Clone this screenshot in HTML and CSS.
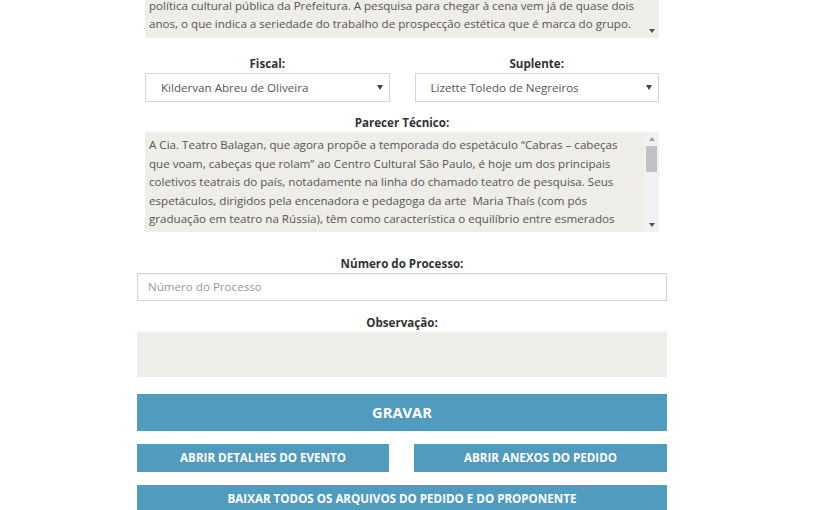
FILE: index.html
```html
<!DOCTYPE html>
<html lang="pt-BR">
<head>
<meta charset="utf-8">
<title>Parecer</title>
<link rel="stylesheet" href="styles.css">
</head>
<body>
<div class="page">
  <div class="inner">
    <div class="area area-top">
      <div class="area-text">
        <p>política cultural pública da Prefeitura. A pesquisa para chegar à cena vem já de quase dois<br>anos, o que indica a seriedade do trabalho de prospecção estética que é marca do grupo.</p>
      </div>
      <div class="sbar sbar-plain">
        <span class="arr-down"></span>
      </div>
    </div>

    <div class="two-col sec-fiscal">
      <div class="field">
        <label class="lbl">Fiscal:</label>
        <div class="select">Kildervan Abreu de Oliveira<span class="caret"></span></div>
      </div>
      <div class="field">
        <label class="lbl">Suplente:</label>
        <div class="select">Lizette Toledo de Negreiros<span class="caret"></span></div>
      </div>
    </div>

    <div class="field sec-parecer">
      <label class="lbl">Parecer Técnico:</label>
      <div class="area area-parecer">
        <div class="area-text">
          <p>A Cia. Teatro Balagan, que agora propõe a temporada do espetáculo “Cabras – cabeças que voam, cabeças que rolam” ao Centro Cultural São Paulo, é hoje um dos principais coletivos teatrais do país, notadamente na linha do chamado teatro de pesquisa. Seus espetáculos, dirigidos pela encenadora e pedagoga da arte&nbsp; Maria Thaís (com pós graduação em teatro na Rússia), têm como característica o equilíbrio entre esmerados</p>
        </div>
        <div class="sbar">
          <span class="arr-up"></span>
          <span class="thumb"></span>
          <span class="arr-down"></span>
        </div>
      </div>
    </div>
  </div>

  <div class="field sec-num">
    <label class="lbl">Número do Processo:</label>
    <div class="input">Número do Processo</div>
  </div>

  <div class="field sec-obs">
    <label class="lbl">Observação:</label>
    <div class="obs"></div>
  </div>

  <div class="btn btn-big">GRAVAR</div>
  <div class="btn-row">
    <div class="btn">ABRIR DETALHES DO EVENTO</div>
    <div class="btn">ABRIR ANEXOS DO PEDIDO</div>
  </div>
  <div class="btn btn-last">BAIXAR TODOS OS ARQUIVOS DO PEDIDO E DO PROPONENTE</div>
</div>
</body>
</html>
```

FILE: styles.css
```css
* { box-sizing: border-box; }
html, body { margin: 0; padding: 0; background: #fff; }
body {
  font-family: "Open Sans", "Liberation Sans", sans-serif;
  font-size: 11.6px;
  color: #555;
  overflow: hidden;
  height: 510px;
}
.page {
  width: 530px;
  margin-left: 137px;
}
.inner { padding: 0 8px; }

.lbl {
  display: block;
  text-align: center;
  font-weight: 700;
  color: #333;
  font-size: 11.6px;
  line-height: 18px;
  height: 18px;
}

.area {
  display: grid;
  grid-template-columns: 1fr 15px;
  background: #eeede8;
  overflow: hidden;
}
.area-text {
  padding: 4px 8px 0 4px;
  line-height: 18.6px;
  color: #555;
  overflow: hidden;
}
.area-text p { margin: 0; }
.area-top {
  height: 38px;
}
.area-top .area-text {
  height: 38px;
  display: flex;
  flex-direction: column;
  justify-content: flex-end;
  padding-top: 0;
  padding-bottom: 4px;
  white-space: nowrap;
}
.area-parecer { height: 100px; }
.area-parecer .area-text { height: 100px; }

.sbar {
  background: #f1f1f1;
  display: flex;
  flex-direction: column;
  align-items: center;
}
.sbar-plain { background: #eeede8; justify-content: flex-end; padding-bottom: 5px; }
.arr-up, .arr-down {
  width: 0; height: 0;
  border-left: 3.5px solid transparent;
  border-right: 3.5px solid transparent;
}
.arr-up { border-bottom: 4px solid #a3a3a3; margin-top: 5px; }
.arr-down { border-top: 4px solid #505050; }
.area-parecer .arr-down { margin-top: auto; margin-bottom: 5px; }
.thumb {
  width: 11px;
  height: 26px;
  background: #c1c1c1;
  margin-top: 5px;
}

.two-col {
  display: grid;
  grid-template-columns: 1fr 1fr;
  gap: 25px;
}
.sec-fiscal { margin-top: 17px; }
.select {
  position: relative;
  height: 29px;
  border: 1px solid #d4d4d4;
  background: #fff;
  padding: 0 15px;
  line-height: 27px;
  color: #555;
  white-space: nowrap;
}
.caret {
  position: absolute;
  right: 6px;
  top: 11px;
  width: 0; height: 0;
  border-left: 3px solid transparent;
  border-right: 3px solid transparent;
  border-top: 5px solid #444;
}

.sec-parecer { margin-top: 12px; }
.sec-num { margin-top: 23px; }
.input {
  height: 28px;
  border: 1px solid #d4d4d4;
  box-shadow: inset 0 1px 1px rgba(0,0,0,0.04);
  padding: 0 10px;
  line-height: 26px;
  color: #999;
  background: #fff;
}
.sec-obs { margin-top: 13px; }
.obs {
  height: 45px;
  background: #eeede8;
}

.btn {
  background: #519bbe;
  color: #fff;
  font-weight: 700;
  text-align: center;
  font-size: 11.6px;
  height: 28px;
  line-height: 28px;
  white-space: nowrap;
}
.btn-big {
  margin-top: 17px;
  height: 37px;
  line-height: 37px;
  font-size: 14.7px;
}
.btn-row {
  margin-top: 13px;
  display: grid;
  grid-template-columns: 252px 253px;
  gap: 25px;
}
.btn-last { margin-top: 13px; height: 30px; }
```
